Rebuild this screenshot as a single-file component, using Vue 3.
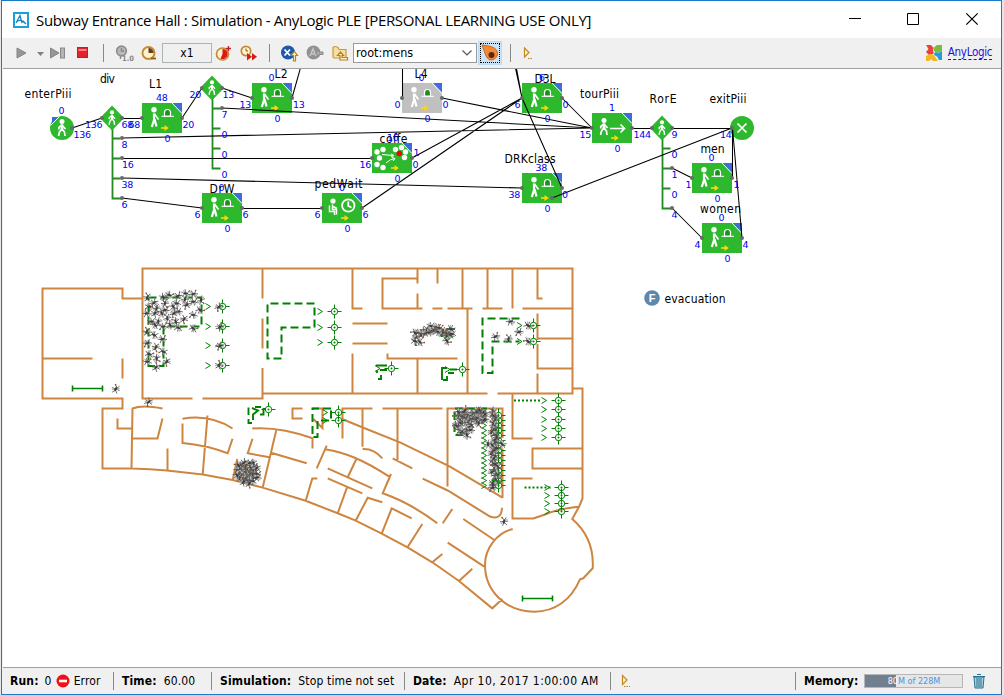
<script setup>
const boxes = [
  { x: 142, y: 103 }, { x: 252, y: 83 }, { x: 402, y: 83, off: true }, { x: 202, y: 193 },
  { x: 522, y: 83 }, { x: 522, y: 173 }, { x: 692, y: 163 }, { x: 702, y: 223 },
  { x: 372, y: 143, kind: 'group' }, { x: 322, y: 193, kind: 'wait' }, { x: 592, y: 113, kind: 'go' },
].map(b => ({ kind: 'service', ...b }))

const labels = [
  ['enterPiii', 24.5, 98, 47], ['div', 100, 83, 15], ['L1', 149, 88, 13], ['L2', 274.5, 78, 13],
  ['L4', 414.5, 78, 13], ['coffe', 379.5, 143, 28], ['pedWait', 314.5, 188, 48], ['DrW', 209.5, 193, 25],
  ['D3L', 534.5, 83, 21], ['tourPiii', 580, 98, 39], ['RorE', 649.5, 103, 27], ['exitPiii', 709.5, 103, 37],
  ['men', 700.5, 153, 24], ['women', 700, 213, 41], ['DRKclass', 504.5, 163, 51], ['evacuation', 664.5, 303, 61],
]

const counts = [
  ['0', 58.5, 114], ['136', 73.5, 138], ['136', 85, 128], ['68', 121.5, 128], ['68', 128.5, 128],
  ['48', 156, 101], ['0', 164.5, 142], ['20', 182.5, 128], ['20', 189.5, 98], ['13', 222.5, 98],
  ['13', 239.5, 108], ['7', 221.5, 118], ['0', 221.5, 138], ['0', 221.5, 158], ['0', 221.5, 178],
  ['8', 121.5, 148], ['16', 122, 168], ['38', 121.5, 188], ['6', 121.5, 208], ['6', 194.5, 218],
  ['0', 218.5, 191], ['0', 224.5, 232], ['6', 242.5, 218], ['6', 314.5, 218], ['6', 362.5, 218],
  ['0', 339, 191], ['0', 344.5, 232], ['16', 359.5, 168], ['0', 412.5, 168], ['1', 413.5, 155.5],
  ['16', 387, 141], ['0', 394.5, 182], ['13', 293, 108], ['0', 268.5, 81], ['0', 274.5, 122],
  ['0', 394.5, 108], ['0', 442.5, 108], ['0', 424.5, 122], ['0', 418.5, 81], ['6', 514.5, 108],
  ['0', 562.5, 108], ['0', 544.5, 122], ['6', 539, 81], ['1', 609, 111], ['15', 579.5, 138],
  ['144', 633.5, 138], ['0', 614.5, 152], ['9', 671.5, 138], ['0', 671.5, 158], ['1', 671.5, 178],
  ['0', 671.5, 198], ['4', 671.5, 218], ['14', 720, 138], ['0', 708.5, 161], ['1', 685.5, 188],
  ['1', 733.5, 188], ['0', 714.5, 202], ['0', 718.5, 221], ['4', 694.5, 248], ['4', 742.5, 248],
  ['0', 724.5, 262], ['38', 535.5, 171], ['38', 508.5, 198], ['0', 562, 198], ['0', 544.5, 212],
]

const ports = [
  [72, 128], [102, 118], [122, 118], [142, 118], [182, 118], [202, 88], [222, 88], [222, 108], [252, 98],
  [292, 98], [122, 138], [122, 158], [122, 178], [122, 198], [202, 208], [242, 208], [322, 208], [362, 208],
  [372, 158], [412, 158], [402, 98], [442, 98], [522, 98], [562, 98], [522, 188], [562, 188], [552, 198],
  [592, 128], [632, 128], [652, 128], [672, 128], [672, 168], [672, 208], [692, 178], [732, 178],
  [702, 238], [742, 238], [732, 128],
]

const wires = `M72 128L102 118M122 118.500H142M182 118L202 88M222 88L252 98M292 98L301 66M222 108L592 128
M122 138L592 128M122 158.500H372M122 178L522 188M122 198L202 208M242 208.500H322M362 208L522 98M412 158L522 98
M402.5 98V66M442 98L592 128M562 98L592 128M562 188L522 98L515 66M522 98L516 66M552 198L732 128M632 128.500H652M672 128.500H732
M672 168L692 178M672 208L702 238M732.5 178V128L742 238`

const walls = `M142.5 298.5H122.5V288.5H42.5V398.5H122.5V408.5H102.5V468.5H131.5
L150 469.3L167 470.5L202.7 474.4L232.7 480L262.7 487.6L305.7 500.7L337.7 513.3L355.7 520.7L381.7 533.6L407.5 547.3L432.3 562.3L459 581L492.3 608.3L502.3 599
M42.5 358.5H92.5M122.5 358.5V378.5M192.5 398.5H142.5V268.5H572.5V393.5H497.5M202.5 398.5H262.5V368.5M262.5 318.5V348.5M262.5 268.5V298.5
M162.5 408.5Q142 404.5 132.5 408.5L131.5 468.5M117.5 418.5V428.5H132M132 438.5H157.5L162.5 418.5M167.5 448.5V470.5
M182.5 418.7Q210 414 232.5 428.5M182.5 423.5V443Q206 445 227.7 453.3L232.5 438.7M207.5 415.5L202.7 474.4
M237.3 459L232.7 480M252.3 428.5C275 427 295 432 312.5 438.3V448.5M252.5 438.7L247.7 453.3L269.5 457.3M276.2 430.5L262.7 487.6M271 452.7L306.7 463.3
M316.7 468.3L326.7 445.7M325 449.3C346 453 362 459 389.3 476.7M391 474L382.7 493.3C402 500 421 511 437.3 523.3
M356.7 458.3L347.7 477.3M327.7 468.3L372.3 488.3M327.7 478.3L362.3 493.3M317.3 478.5H312.3L305.7 500.7M347.3 486.7L337.7 513.3
M382.3 502.3L367.7 497.7L355.7 520.7M411.7 518.3L391.7 508.3L381.7 533.6M422.3 524L407.5 547.3M302.5 408.5H292.5V418.5H302.5
M312.5 408.5H322.5V428L313.3 419M372.5 408.5H342.5V438.5M382.5 408.5H442.5M342.7 419.3L362.7 427.5L400 442.3L450 466.7L502.5 497.7
M362.5 408.5V446.7M362.7 449Q374 448.5 382.3 458.3M397.5 408.5V461M392.7 458.3L412.3 468.3M422.7 478.7L447.7 490.5L490 516.5Q501.5 520.5 502 507.7
M463.3 519L494.3 540M452.3 509L442.7 523.3M447.7 542.7L484.3 566.7M442.3 554L432.3 562.3M472.3 568.7L459 581
M512.7 529C497 533 485 548 485 565C485 592 507 611.7 534.3 611.7C555 611.7 571 600 580 579.3L583.3 578.3L592.7 568.3C594 546 585 530 572.3 519L579 506.7L582.5 498.5V388.5H572.5
M532.5 478.5H512.5V518.5H533.3L545 514.5Q557 509 579 506.7M512.5 393.5V438.5H532.5M582.5 448.5H532.5V468.5H582.5
M502.5 438V408.5H447.5V486.5M502.5 448.5V498M262.5 368V393.5H487.5M352.5 268.5V308.5H362.5M352.5 323.5H387.5M352.5 343.5H387.5M352.5 353.5V393.5
M387.5 353.5V358.5H457.5M417.5 358.5V393.5M417.5 268.5V283.5M417.5 278.5H382.5V308.5H422.5M417.5 293.5V308.5M437.5 268.5V283.5M432.5 308.5H442.5
M447.5 308.5H472.5M462.5 268.5V308.5M487.5 268.5V308.5M482.5 308.5H502.5M512.5 268.5V308.5M537.5 268.5V298.5H542.5M522.5 308.5H572.5
M467.5 308.5V393.5M537.5 313.5V340M537.5 344V368.5H572.5M537.5 338.5H572.5M537.5 373.5V393.5`

const queues = [
  'M148.5 297.5H201.5V326.5H163.5V366H148.5Z',
  'M314.5 303.5H267.5V358.5H281.5V327.5H314.5Z',
  'M519.5 318.5H482.5V373H492.5V341.5H519.5',
  'M331 408.5H312.5V437H317.5V420.5H331Z',
  'M487 408.5H454.5V435H464',
]
const queueBits = `M248.5 407.5V415M248.5 419V423H252M253 420V414.5L258 410.5L252 408M255 407H261M260 414.5H263.5V409H266
M376 365.5H387M380 370H387M377 370.5V373M378 379H381V375M442 380V368H447M443 380H447V376M448 373H454M450 369.5H457M416 341V346M446 329H455M440 335H448M241 469H252M247 474H256M246 465V472`

const column = (x, ys) => ys.map(y => [x, y])
const targets = [
  ...column(222.5, [306.5, 326.5, 345.5, 365.5]), ...column(334.5, [311.5, 327.5, 342.5]),
  [391.5, 368.5], [462.5, 369.5], [447.5, 336.5], [268.5, 409.5], ...column(338.5, [412.5, 420.5]),
  ...column(533.5, [325.5, 341.5]), ...column(558.5, [400.5, 409.5, 419.5, 428.5, 437.5]),
  ...column(561.5, [487.5, 495.5, 503.5, 511.5]),
  ...column(498.5, Array.from({ length: 15 }, (_, i) => 415.5 + i * 5)),
]
const chevrons = [
  ...column(205.5, [306.5, 326.5, 345.5, 365.5]), ...column(317.5, [311.5, 327.5, 342.5]),
  [375, 368.5], [445, 369.5], ...column(322.5, [412.5, 420.5]), ...column(517, [325.5, 341.5]),
  ...column(541.5, [400.5, 409.5, 419.5, 428.5, 437.5]), ...column(544.5, [487.5, 495.5, 503.5, 511.5]),
  ...column(481.5, Array.from({ length: 14 }, (_, i) => 420.5 + i * 5)),
]

let seed = 11
const rand = () => (seed = (seed * 16807) % 2147483647) / 2147483647
const scatter = (n, x, y, w, h) => Array.from({ length: n }, (_, i) => [x + w * ((i + rand()) / n), y + rand() * h])
const hall = [
  [352,112],[372,128],[400,112],[418,105],[443,108],[467,100],[490,102],[513,120],[358,140],[380,145],[405,130],
  [440,130],[465,118],[490,125],[510,150],[490,165],[462,178],[445,155],[432,160],[412,175],[395,160],[375,160],
  [350,160],[365,185],[385,185],[405,150],[420,195],[445,203],[490,205],[400,200],[350,215],[372,225],[397,237],
  [352,250],[378,262],[400,275],[358,282],[380,295],[410,305],[352,305],[378,322],[437,185],[470,135],[430,140],[375,195],
].map(([a, b]) => [30 + a / 3, 260 + b / 3])
const disc = Array.from({ length: 34 }, (_, i) => {
  const r = 11.5 * Math.sqrt((i + 0.5) / 34)
  return [247.5 + r * Math.cos(i * 2.4), 472.5 + r * Math.sin(i * 2.4)]
})
const slope = Array.from({ length: 20 }, (_, i) => {
  const t = i / 19
  return [416 + t * 34 + rand() * 2, 338 - Math.sin(t * 3.1) * 9 + (rand() - 0.5) * 8]
})
const people = [
  ...hall, ...disc, ...slope,
  [219, 307], [220, 327], [220, 346], [219, 365], [115.7, 389], [148.7, 402], [504, 521.5],
  [510.5, 321.5], [495.5, 336.5], [508.5, 339], [519, 332], [528, 325.5], [528, 341.5],
  [415, 341], [420, 342], [447, 341], [451, 329], [415, 333],
  ...scatter(22, 456, 410, 30, 8), ...scatter(18, 456, 416, 29, 9), ...scatter(7, 457, 426, 14, 8), [467, 435],
  ...Array.from({ length: 30 }, (_, i) => [491 + rand() * 7, 411 + i * 2.65]), [488, 444], [502, 444],
].map(([x, y]) => `translate(${x.toFixed(1)} ${y.toFixed(1)}) rotate(${Math.floor(rand() * 360)})`)
</script>

<template>
  <div class="screen">
    <div class="window">
      <header class="title">
        <svg class="app" width="16" height="16" viewBox="0 0 16 16">
          <rect x="1" y="1" width="14" height="14" fill="#fff" stroke="#17a0dc" stroke-width="2" />
          <path d="M3 11L7 3.5L9 11M3.5 10Q7 6 12.5 11.5M9.5 8.5L13 12" fill="none" stroke="#1684b5" stroke-width="1.3" />
        </svg>
        <h1>Subway Entrance Hall : Simulation - AnyLogic PLE [PERSONAL LEARNING USE ONLY]</h1>
        <svg class="controls" width="140" height="37" viewBox="846 1 140 37" fill="none" stroke="#000">
          <path d="M849 18.5H861M907.5 13.5H918.5V24.5H907.5Z" />
          <path d="M966.3 13.3L977.7 24.7M977.7 13.3L966.3 24.7" stroke-width="1.2" />
        </svg>
      </header>

      <nav class="toolbar">
        <svg width="18" height="18"><path d="M5 4L14 9L5 14Z" fill="#969696" stroke="#858585" /></svg>
        <svg width="20" height="18"><path d="M7 8H14L10.500 12Z" fill="#808080" /></svg>
        <svg width="18" height="18"><path d="M1.500 4L10 9L1.500 14Z" fill="#969696" stroke="#858585" /><rect x="11.500" y="4" width="4" height="10" fill="#b5b5b5" stroke="#888" /></svg>
        <svg width="18" height="18"><rect x="3.500" y="3.500" width="10" height="10" fill="#e8202c" stroke="#b8202a" /><path d="M4.500 6H12.500" stroke="#f4878b" stroke-width="2" /></svg>
        <i class="sep"></i>
        <svg width="20" height="18"><circle cx="7.500" cy="7" r="4.800" fill="#b9b9b9" stroke="#8d8d8d" stroke-width="1.700" /><path d="M7.500 4V7H10M6.500 12V15" stroke="#888" stroke-width="1.400" fill="none" /><text x="8" y="16.500" class="tiny">1.0</text></svg>
        <svg width="18" height="18"><circle cx="8.500" cy="9" r="6" fill="#fff3cf" stroke="#c38a34" stroke-width="1.900" /><path d="M8.500 9V4A5 5 0 0 1 13.500 9Z" fill="#6b3a19" /><path d="M11 14.500H16" stroke="#8e5917" stroke-width="1.800" /></svg>
        <span></span>
        <div class="speed">x1</div>
        <svg width="20" height="18"><circle cx="8.500" cy="10" r="6" fill="#fff3cf" stroke="#c38a34" stroke-width="1.700" /><path d="M8.500 10V5A5 5 0 1 1 6.500 14.500Z" fill="#df1717" /><path d="M12 4.500H17M14.500 2V7" stroke="#c22121" stroke-width="1.300" /></svg>
        <svg width="20" height="18"><circle cx="7" cy="7" r="4.700" fill="#fff3cf" stroke="#c38a34" stroke-width="1.700" /><path d="M7 4.500V7H9" stroke="#8e5917" fill="none" /><path d="M8 9L13 12.800L8 16.500ZM13 9L18 12.800L13 16.500Z" fill="#d51b13" /></svg>
        <i class="sep"></i>
        <svg width="20" height="18"><circle cx="8" cy="8.500" r="7" fill="#1c59ab" /><path d="M4.500 5.500L10 11.500M10 5.500L4.500 11.500" stroke="#fff" stroke-width="1.800" /><path d="M13.500 17V11.500H11L14.300 7.500L17.500 11.500H15.500V17Z" fill="#fff5c5" stroke="#b7811c" stroke-width="1.200" /></svg>
        <svg width="20" height="18"><circle cx="8.500" cy="8.500" r="6.900" fill="#929292" /><path d="M5 12L8 5L11 12M6.500 10H10" stroke="#c5c5c5" stroke-width="1.500" fill="none" /><path d="M18 8H14V6L10.500 9.500L14 12.500V10.500H18Z" fill="#aaa" stroke="#888" /></svg>
        <svg width="20" height="18"><path d="M3 13V3.500Q5 1.500 8 3.500L9 5.500H16V14H4Z" fill="#f5dfa3" stroke="#c9993d" stroke-width="1.200" /><path d="M17.500 16H10V11.500H7.500L10.500 8L13.500 11.500H12V13.500H17.500Z" fill="#fff6ce" stroke="#b7811c" stroke-width="1.200" /></svg>
        <div class="combo"><span>root:mens</span><svg width="12" height="8"><path d="M1.500 1.500L6 6L10.500 1.500" fill="none" stroke="#555" stroke-width="1.200" /></svg></div>
        <span></span>
        <div class="focus"><svg width="18" height="18"><path d="M1 1Q13 2 15.500 6Q18.500 11 13.500 15Q8 18 5 12Q4 9 1 1Z" fill="#f28a38" stroke="#cf6719" /><circle cx="10.500" cy="11" r="3" fill="#5b2710" /></svg></div>
        <i class="sep"></i>
        <svg width="14" height="18"><path d="M3.500 4V13L8 8.500Z" fill="#fff2c0" stroke="#c18a27" stroke-width="1.200" /><path d="M7 14.500H12" stroke="#b78328" stroke-dasharray="1.500 1" /></svg>
        <span></span>
        <svg width="18" height="18"><path d="M1 1H6L8.500 4L8 7L9 9.500L4 11L1 8L3.500 5Z" fill="#ec3f3c" /><path d="M7 1L9 3.500L12 1H17V7L12 9L9 7L9 4Z" fill="#79bb3b" /><path d="M10 8L13 9L17 7V16L14 16L12 12.500L9 11Z" fill="#279bd8" /><path d="M1 17V12L5 10L8 10.500L10 12.500L13 17H8L6 15L4 17Z" fill="#f3b721" /></svg>
        <a class="brand">AnyLogic</a>
      </nav>

      <svg class="canvas" width="998" height="598" viewBox="3 69 998 598">
        <defs>
          <g id="person">
            <circle cx="0" cy="-6.500" r="2.500" fill="#fff" stroke="none" />
            <path d="M0 -3.500V2" stroke-width="2.600" />
            <path d="M0 -3L-3.200 -.5V1.500M0 -3L3.500 1M0 1L-2.500 4L-3.500 8M0 1L2.500 4L3 8" />
          </g>
          <g id="bug">
            <path d="M-4.500 -1.500L-1.500 -.5L-3.500 3M4.500 1L1 -.5L3 -3.500M-1 -4L0 0L1 4" fill="none" stroke="#666" stroke-width=".9" />
            <path d="M-2.800 -3L2.800 2.800" stroke="#b5b5b5" stroke-width="1.300" />
            <ellipse rx="2.200" ry="1.100" fill="#3c3c3c" />
            <circle cx="-3.500" cy="2.500" r=".8" fill="#93592f" />
          </g>
          <g id="target" fill="none" stroke="#008000">
            <circle r="3.200" /><path d="M-7 0H-3M3 0H7M0 -7V-3M0 3V7" /><circle r="1" fill="#008000" stroke="none" />
          </g>
        </defs>

        <path :d="walls" class="wall" />
        <g class="queue"><path v-for="q in queues" :key="q" :d="q" /></g>
        <path :d="queueBits" class="bits" />
        <path d="M514 400.500H541M524.500 487.500H551" class="dots" />
        <path d="M72.500 388.500H102.500M72.500 385.500V391.500M102.500 385.500V391.500M522.500 598.500H552.500M522.500 595.500V601.500M552.500 595.500V601.500" class="area" />
        <path v-for="(c, i) in chevrons" :key="'c' + i" :d="`M${c[0]} ${c[1] - 3}L${c[0] + 5} ${c[1]}L${c[0]} ${c[1] + 3}`" class="chev" />
        <use v-for="(t, i) in targets" :key="'t' + i" href="#target" :x="t[0]" :y="t[1]" />
        <use v-for="(p, i) in people" :key="'p' + i" href="#bug" :transform="p" />

        <g class="branch">
          <path d="M120.500 138.500H113M113 158.500H120.500M113 178.500H120.500M112.500 128V198.500H121" />
          <path d="M221 108.500H213M213 128.500H220.500M213 148.500H220.500M212.500 98V168.500H220.500" />
          <path d="M662.500 138V208.500H671M662.500 148.500H670.500M662.500 168.500H671M662.500 188.500H670.500" />
        </g>
        <g class="shape">
          <path v-for="d in [[112, 118], [212, 88], [662, 128]]" :key="d[0]" :d="`M${d[0] - 12} ${d[1]}L${d[0]} ${d[1] - 12.500}L${d[0] + 12} ${d[1]}L${d[0]} ${d[1] + 12.500}Z`" />
          <circle cx="62" cy="128" r="12" /><circle cx="742" cy="128" r="12" />
        </g>
        <path d="M52 124V117H59Z" fill="#3f68e0" />
        <path d="M50.500 125.500L59.500 116.500" stroke="#fff" />
        <g class="man">
          <use href="#person" x="62" y="128" />
          <use href="#person" transform="translate(112 118) scale(.85)" />
          <use href="#person" transform="translate(212 88) scale(.85)" />
          <use href="#person" transform="translate(662 128) scale(.85)" />
          <path d="M737.500 123.500L746.500 132.500M746.500 123.500L737.500 132.500" />
        </g>
        <g v-for="b in boxes" :key="b.x + '-' + b.y" :transform="`translate(${b.x} ${b.y})`">
          <rect width="40" height="30" :fill="b.off ? '#c0c0c0' : '#2eb82e'" />
          <path d="M31 0H40V9.500Z" fill="#4169e1" /><path d="M30 0L40 10.500" stroke="#fff" />
          <g v-if="b.kind === 'service'" class="man">
            <circle cx="12" cy="6.800" r="2.700" fill="#fff" stroke="none" />
            <path d="M12 10.500V17L9.800 24M12.500 16L14.500 23.500" stroke-width="2.200" /><path d="M12.500 11L16.500 16.500" />
            <path d="M19.500 13.300H32" stroke-width="1" />
            <path d="M22.500 13V9.500Q22.500 6.500 25.500 6.500T28.500 9.500V13Z" fill="#228b22" stroke-width="1.200" />
          </g>
          <g v-else-if="b.kind === 'group'" class="man">
            <g fill="#fff" stroke="none">
              <circle v-for="c in [[5, 9], [11, 6.500], [7.500, 15], [5, 21.500], [11, 24.500], [23.500, 6.500], [29.500, 4.500], [33.500, 9], [32.500, 14.500]]" :key="c[0] + '_' + c[1]" :cx="c[0]" :cy="c[1]" r="2.700" />
            </g>
            <path d="M10 11.500L21 12.500M19 11L22 12.500L19 14M14 20Q18 16 23 15.500M20 14.500L23 15.500L21 18" stroke-width="1" />
            <circle cx="27.300" cy="10.500" r="2.800" fill="#f00" stroke="none" />
          </g>
          <g v-else-if="b.kind === 'wait'" class="man">
            <circle cx="11" cy="8" r="2.600" fill="#fff" stroke="none" />
            <path d="M10.500 11.500V16.500H14.500V21.500M10 13L15 15.500M7.500 12.500V18.500H12.500V22" stroke-width="1.500" />
            <circle cx="26.300" cy="12.500" r="6.200" stroke-width="1.800" /><path d="M26.300 8.500V13L29.500 14.500" stroke-width="1.800" />
          </g>
          <g v-else class="man">
            <use href="#person" x="12" y="14" /><path d="M18 15.500H32M28.500 11.500L32.500 15.500L28.500 19.500" />
          </g>
          <path d="M19 25H24" stroke="#ffd800" stroke-width="1.600" /><path d="M22.500 22L26.800 25L22.500 28Z" fill="#ffd800" />
        </g>
        <path :d="wires" class="wire" />
        <circle v-for="(p, i) in ports" :key="'o' + i" :cx="p[0]" :cy="p[1]" r="2" fill="#696969" />
        <circle cx="652" cy="298" r="7.800" fill="#5c88ad" />
        <text x="652" y="302.200" class="fn">F</text>
        <text v-for="l in labels" :key="l[0]" :x="l[1]" :y="l[2]" :textLength="l[3]" class="label">{{ l[0] }}</text>
        <text v-for="(c, i) in counts" :key="'n' + i" :x="c[1]" :y="c[2]" class="count">{{ c[0] }}</text>
      </svg>

      <footer class="status">
        <div class="cell run"><b>Run:</b><span>0</span>
          <svg width="14" height="14"><circle cx="7" cy="7" r="6.500" fill="#f01018" /><path d="M3 7H11" stroke="#fff" stroke-width="2.600" /></svg>
          <span>Error</span></div>
        <div class="cell time"><b>Time:</b><span>60.00</span></div>
        <div class="cell sim"><b>Simulation:</b><span>Stop time not set</span></div>
        <div class="cell date"><b>Date:</b><span>Apr 10, 2017 1:00:00 AM</span></div>
        <div class="cell log"><svg width="14" height="18"><path d="M3.500 3.500V12.500L8 8Z" fill="#fff2c0" stroke="#c18a27" stroke-width="1.200" /><path d="M5 14.500H11" stroke="#b78328" stroke-dasharray="1.500 1" /></svg></div>
        <div class="cell mem"><b>Memory:</b>
          <div class="bar"><div class="used"></div><span><em>80</em>M of 228M</span></div>
          <svg width="14" height="16" fill="none" stroke="#286f8e"><path d="M2 4H12L11 15H3Z" fill="#a5d5e4" /><path d="M1 3.500H13M5 1.500H9M5 5V14M7 5V14M9 5V14" /></svg>
        </div>
      </footer>
    </div>
  </div>
</template>

<style>
body { margin: 0; overflow: hidden; }
</style>

<style scoped>
.screen { box-sizing: border-box; width: 1004px; height: 695px; padding: 0 2px 0 1px; background: #e4e7ea; }
.window { box-sizing: border-box; width: 1001px; height: 695px; border: 1px solid #1a7ac9; background: #f0f0f0; display: flex; flex-direction: column; font-family: "DejaVu Sans Condensed", "DejaVu Sans", sans-serif; color: #000; }
.title { height: 37px; flex: none; background: #fff; display: flex; align-items: center; }
.app { margin-left: 11px; flex: none; }
h1 { margin: 0 auto 0 7px; font: 400 15px "Open Sans", "Noto Sans", sans-serif; white-space: nowrap; letter-spacing: -.335px; }
.controls { margin-right: 15px; flex: none; }
.toolbar { height: 30px; flex: none; box-sizing: border-box; display: grid; align-items: center; justify-items: center; grid-template-columns: 18px 20px 16px 33px 9px 32px 18px 4px 50px 24px 26px 15px 26px 24px 26px 124px 1px 24px 16px 20px 1fr 28px 44px; padding: 0 9px 0 10px; }
.toolbar svg { overflow: visible; }
.sep { width: 1px; height: 18px; background: #888; }
.tiny { font: bold 7.500px "DejaVu Sans Condensed", sans-serif; fill: #888; }
.speed { box-sizing: border-box; width: 50px; height: 20px; border: 1px solid #adb2b5; font-size: 12px; line-height: 19px; text-align: center; }
.combo { box-sizing: border-box; width: 124px; height: 20px; border: 1px solid #999; background: #fff; display: flex; align-items: center; justify-content: space-between; padding: 0 3px 0 2px; font-size: 12.500px; line-height: 18px; }
.focus { box-sizing: border-box; width: 24px; height: 24px; background: #cce4f7; border: 1px solid #bcdcf4; display: grid; place-items: center; }
.focus svg { outline: 1px dotted #000; }
.brand { font: 11.500px "DejaVu Sans Condensed", sans-serif; letter-spacing: -.3px; color: #1b12d8; border-bottom: 1px dashed #1b12d8; white-space: nowrap; line-height: 13px; }
.canvas { box-sizing: border-box; flex: none; display: block; width: 998px; height: 600px; background: #fff; border: solid #a0a0a0; border-width: 1px 0 1px 0; margin-left: 1px; }
.wall { fill: none; stroke: #cd853f; stroke-width: 2; }
.queue { fill: none; stroke: #008000; stroke-width: 2; stroke-dasharray: 8 4; }
.bits { fill: none; stroke: #008000; stroke-width: 1.900; }
.dots { stroke: #008000; stroke-width: 1.800; stroke-dasharray: 2 2; }
.area { fill: none; stroke: #008000; stroke-width: 1.600; }
.chev { fill: none; stroke: #008000; }
.branch { fill: none; stroke: #228b22; stroke-width: 1.800; }
.shape { fill: #2eb82e; }
.man { fill: none; stroke: #fff; stroke-width: 1.700; }
.wire { fill: none; stroke: #000; stroke-width: 1.050; }
.fn { font: bold 11px "Liberation Sans", sans-serif; fill: #fff; text-anchor: middle; }
.label { font: 12px "DejaVu Sans Condensed", "DejaVu Sans", sans-serif; fill: #000; }
.count { font: 9.500px "DejaVu Sans", sans-serif; letter-spacing: -.25px; fill: #0000f0; }
.status { flex: 1; display: flex; align-items: center; font-size: 12px; white-space: nowrap; }
.cell { box-sizing: border-box; height: 18px; display: flex; align-items: center; border-left: 1px solid #888; padding-left: 8px; gap: 7px; }
.cell b { letter-spacing: .15px; }
.cell span { letter-spacing: .15px; }
.run { width: 111px; border-left: 0; gap: 4px; }
.run b { margin-right: 2px; }
.time { width: 98px; }
.sim { width: 193px; }
.date { width: 206px; }
.date span { letter-spacing: .42px; }
.log { width: 185px; }
.mem { flex: 1; gap: 6px; }
.bar { position: relative; box-sizing: border-box; width: 99px; height: 14px; border: 1px solid #b7b7b7; background: #e6e6e6; font-size: 9px; line-height: 12px; text-align: center; color: #4796e8; }
.used { position: absolute; left: 0; top: 0; width: 31px; height: 12px; background: #708090; }
.bar span { position: relative; letter-spacing: 0; }
.bar em { font-style: normal; color: #fff; }
.mem > svg { margin-left: 3px; }
</style>
